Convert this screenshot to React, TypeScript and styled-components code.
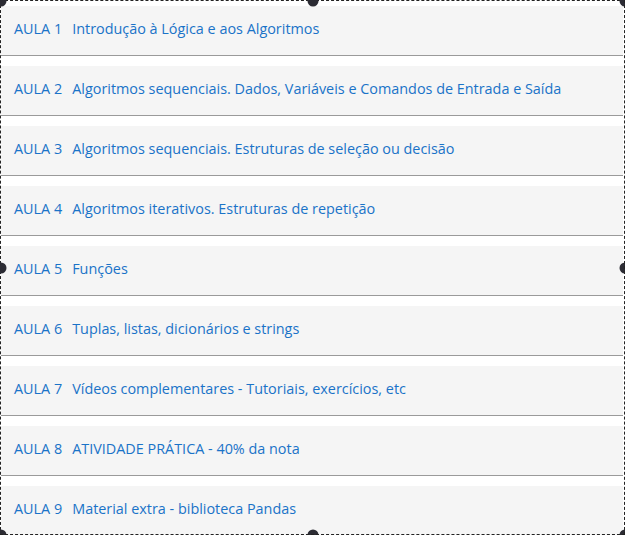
import styled, { createGlobalStyle } from "styled-components";

const GlobalStyle = createGlobalStyle`
  body {
    margin: 0;
    background: #ffffff;
    font-family: "Open Sans", "Noto Sans", sans-serif;
  }
`;

const lessons = [
  "Introdução à Lógica e aos Algoritmos",
  "Algoritmos sequenciais. Dados, Variáveis e Comandos de Entrada e Saída",
  "Algoritmos sequenciais. Estruturas de seleção ou decisão",
  "Algoritmos iterativos. Estruturas de repetição",
  "Funções",
  "Tuplas, listas, dicionários e strings",
  "Vídeos complementares - Tutoriais, exercícios, etc",
  "ATIVIDADE PRÁTICA - 40% da nota",
  "Material extra - biblioteca Pandas",
];

// selection handles around the frame
const handles = [
  { x: "0%", y: "0%" },
  { x: "50%", y: "0%" },
  { x: "100%", y: "0%" },
  { x: "0%", y: "50%" },
  { x: "100%", y: "50%" },
  { x: "0%", y: "100%" },
  { x: "50%", y: "100%" },
  { x: "100%", y: "100%" },
];

const App = () => {
  return (
    <>
      <GlobalStyle />
      <Frame>
        <List>
          {lessons.map((title, index) => (
            <Lesson key={index}>
              <Tag>AULA {index + 1}</Tag>
              <span>{title}</span>
            </Lesson>
          ))}
        </List>
        {handles.map((h, i) => (
          <Handle key={i} $x={h.x} $y={h.y} />
        ))}
      </Frame>
    </>
  );
};

export default App;

const Frame = styled.div`
  position: relative;
  width: 625px;
  height: 535px;
  box-sizing: border-box;
  border: 1px dashed #222;
  border-right: none;
  border-bottom: none;

  &::after {
    content: "";
    position: absolute;
    right: 0;
    bottom: 0;
    left: -1px;
    top: -1px;
    border-right: 1px dashed #222;
    border-bottom: 1px dashed #222;
    pointer-events: none;
  }
`;

const List = styled.div`
  height: 100%;
  overflow: hidden;
  padding: 5px 2px 0 0;
  box-sizing: border-box;
`;

const Lesson = styled.div`
  display: flex;
  align-items: center;
  height: 45px;
  padding: 0 0 4px 13px;
  background: #f5f5f5;
  border-bottom: 1px solid #9a9a9a;
  margin-bottom: 10px;
  font-size: 14.4px;
  color: #1a73c8;
`;

const Tag = styled.span`
  margin-right: 10px;
`;

const Handle = styled.div<{ $x: string; $y: string }>`
  position: absolute;
  left: ${(p) => p.$x};
  top: ${(p) => p.$y};
  width: 11px;
  height: 11px;
  border-radius: 50%;
  background: #2b2b33;
  transform: translate(-50%, -50%);
`;
